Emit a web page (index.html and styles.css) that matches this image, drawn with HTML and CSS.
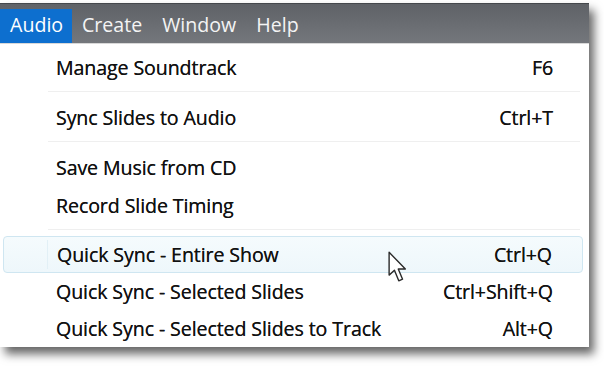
FILE: index.html
```html
<!DOCTYPE html>
<html lang="en">
<head>
    <meta charset="UTF-8">
    <title>Audio menu</title>
    <link rel="stylesheet" href="styles.css">
</head>
<body>
    <div class="window">
        <div class="menubar">
            <span class="menubar-item active">Audio</span>
            <span class="menubar-item">Create</span>
            <span class="menubar-item">Window</span>
            <span class="menubar-item">Help</span>
        </div>

        <div class="dropdown">
            <div class="item">
                <span class="label">Manage Soundtrack</span>
                <span class="shortcut">F6</span>
            </div>
            <div class="separator"></div>
            <div class="item">
                <span class="label">Sync Slides to Audio</span>
                <span class="shortcut">Ctrl+T</span>
            </div>
            <div class="separator"></div>
            <div class="item">
                <span class="label">Save Music from CD</span>
            </div>
            <div class="item">
                <span class="label">Record Slide Timing</span>
            </div>
            <div class="separator"></div>
            <div class="item small hover">
                <span class="label">Quick Sync - Entire Show</span>
                <span class="shortcut">Ctrl+Q</span>
                <svg class="cursor" width="22" height="33" viewBox="0 0 16 26">
                    <path d="M1 1 L1 19 L5.2 15.2 L8.6 23.5 L11.6 22.2 L8.2 14.2 L13.8 14.2 Z" fill="#fff" stroke="#2a2a2a" stroke-width="1.1" stroke-linejoin="round"/>
                </svg>
            </div>
            <div class="item small">
                <span class="label">Quick Sync - Selected Slides</span>
                <span class="shortcut">Ctrl+Shift+Q</span>
            </div>
            <div class="item small">
                <span class="label">Quick Sync - Selected Slides to Track</span>
                <span class="shortcut">Alt+Q</span>
            </div>
        </div>
    </div>
</body>
</html>
```

FILE: styles.css
```css
* {
    margin: 0;
    padding: 0;
    box-sizing: border-box;
}

body {
    font-family: "Open Sans", "Noto Sans", sans-serif;
    background: #fff;
    width: 604px;
    height: 366px;
    overflow: hidden;
}

.window {
    width: 589px;
    margin-top: 3px;
    box-shadow: 5px 7px 9px rgba(0,0,0,0.6);
    background: #fff;
}

.menubar {
    height: 40px;
    background: linear-gradient(#5f6267, #74777c);
    border-top: 1px solid #45484c;
    display: flex;
    align-items: flex-end;
}

.menubar-item {
    height: 34px;
    line-height: 31px;
    padding: 0 10px;
    color: #f4f4f4;
    font-size: 19.6px;
    letter-spacing: 0;
}

.menubar-item.active {
    background: #0d6fcf;
    width: 72px;
    color: #fff;
}

.dropdown {
    padding: 4px 0 0 0;
    border-top: 1px solid #d8d8d8;
}

.item {
    height: 38px;
    display: flex;
    align-items: center;
    padding: 0 36px 0 56px;
    font-size: 19.6px;
    letter-spacing: -0.1px;
    color: #111;
    text-shadow: 0 0 0.4px #333;
    position: relative;
}

.item.small {
    height: 37px;
}

.label {
    flex: 1;
}

.shortcut {
    text-align: right;
}

.separator {
    height: 12px;
    margin: 0 9px 0 48px;
    background: linear-gradient(transparent 5px, #efefef 5px, #efefef 6px, transparent 6px);
}

.item.hover {
    margin: 0 6px 0 3px;
    padding-left: 53px;
    padding-right: 30px;
    border: 1px solid #cfe6f1;
    border-radius: 4px;
    background: linear-gradient(#f5fbfd, #eef7fb);
}

.item.hover::before {
    content: "";
    position: absolute;
    left: 43px;
    top: 3px;
    bottom: 3px;
    border-left: 1px solid #e2f0f6;
}

.cursor {
    position: absolute;
    left: 383px;
    top: 14px;
}
```
